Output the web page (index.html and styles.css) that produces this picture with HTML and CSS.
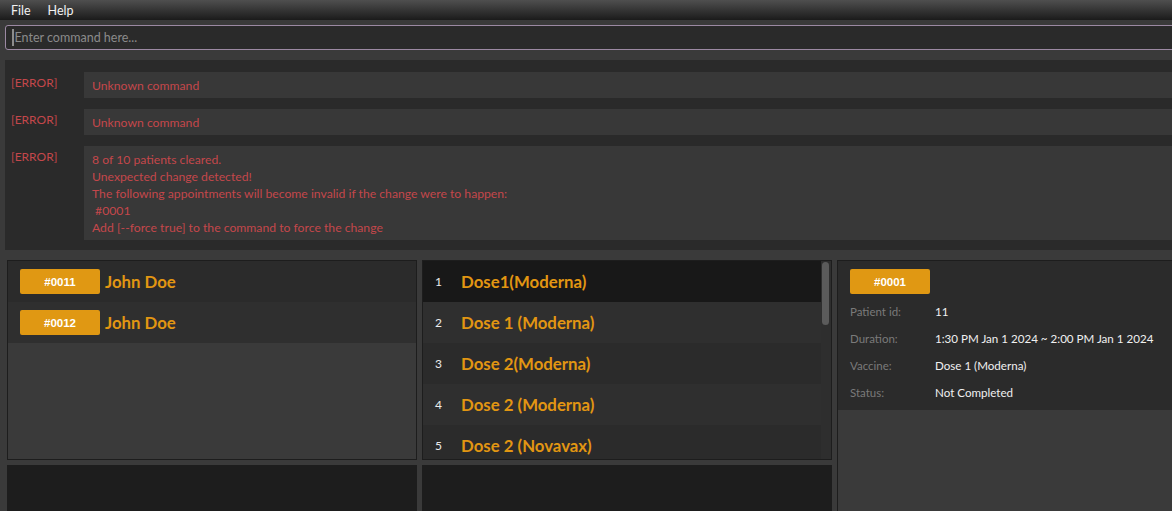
FILE: index.html
```html
<!DOCTYPE html>
<html>
<head>
<meta charset="utf-8">
<link rel="stylesheet" href="styles.css">
</head>
<body>
<div class="menubar">
  <span class="menu-item">File</span>
  <span class="menu-item">Help</span>
</div>
<div class="cmd-wrap">
  <div class="cmd"><span class="caret"></span><span class="placeholder">Enter command here...</span></div>
</div>
<div class="results">
  <div class="result-row">
    <div class="tag">[ERROR]</div>
    <div class="msg">Unknown command</div>
  </div>
  <div class="result-row">
    <div class="tag">[ERROR]</div>
    <div class="msg">Unknown command</div>
  </div>
  <div class="result-row">
    <div class="tag">[ERROR]</div>
    <div class="msg">8 of 10 patients cleared.<br>Unexpected change detected!<br>The following appointments will become invalid if the change were to happen:<br>&nbsp;#0001<br>Add [--force true] to the command to force the change</div>
  </div>
</div>
<div class="panels">
  <div class="panel patients">
    <div class="prow odd"><span class="badge">#0011</span><span class="name">John Doe</span></div>
    <div class="prow even"><span class="badge">#0012</span><span class="name">John Doe</span></div>
  </div>
  <div class="panel vaccines">
    <div class="vlist">
      <div class="vrow sel"><span class="num">1</span><span class="name">Dose1(Moderna)</span></div>
      <div class="vrow even"><span class="num">2</span><span class="name">Dose 1 (Moderna)</span></div>
      <div class="vrow odd"><span class="num">3</span><span class="name">Dose 2(Moderna)</span></div>
      <div class="vrow even"><span class="num">4</span><span class="name">Dose 2 (Moderna)</span></div>
      <div class="vrow odd"><span class="num">5</span><span class="name">Dose 2 (Novavax)</span></div>
    </div>
    <div class="scrollbar"><div class="thumb"></div></div>
  </div>
  <div class="panel detail">
    <div class="card">
      <span class="badge">#0001</span>
      <div class="fields">
        <span class="label">Patient id:</span><span class="value">11</span>
        <span class="label">Duration:</span><span class="value">1:30 PM Jan 1 2024 ~ 2:00 PM Jan 1 2024</span>
        <span class="label">Vaccine:</span><span class="value">Dose 1 (Moderna)</span>
        <span class="label">Status:</span><span class="value">Not Completed</span>
      </div>
    </div>
  </div>
  <div class="panel bottom"></div>
  <div class="panel bottom"></div>
</div>
</body>
</html>
```
FILE: styles.css
```css
* { box-sizing: border-box; }
html, body { margin: 0; padding: 0; height: 100%; overflow: hidden; }
body {
  background: #3a3a3a;
  font-family: "Lato", "Liberation Sans", sans-serif;
  font-size: 12px;
  display: flex;
  flex-direction: column;
}
.menubar {
  height: 20px;
  flex: none;
  background: linear-gradient(#4f4f4f, #1b1b1b);
  display: flex;
  align-items: center;
  gap: 17px;
  padding-left: 11px;
  color: #f2f2f2;
  font-size: 12.5px;
}
.cmd-wrap {
  flex: none;
  padding: 5px 0 10px 5px;
}
.cmd {
  height: 25px;
  margin-right: -10px;
  border: 1.5px solid #9c89a3;
  border-radius: 3px;
  background: #2a2a2a;
  display: flex;
  align-items: center;
  padding-left: 5.5px;
  color: #8a8a8a;
  font-size: 12.5px;
}
.caret {
  width: 2px;
  height: 17px;
  background: #8c8c8c;
  margin-right: 1px;
}
.results {
  flex: none;
  height: 190px;
  margin-left: 5px;
  background: #2a2a2a;
  padding-top: 12px;
  display: flex;
  flex-direction: column;
  gap: 11px;
}
.result-row {
  display: flex;
  color: #c4474b;
  line-height: 17px;
  font-size: 12.2px;
}
.tag {
  width: 79px;
  flex: none;
  padding-left: 6px;
  padding-top: 2px;
  font-size: 12px;
}
.msg {
  flex: 1;
  background: #383838;
  padding: 5px 8px 4px;
}
.panels {
  flex: 1;
  display: grid;
  grid-template-columns: 410px 410px 1fr;
  grid-template-rows: 200px 1fr;
  column-gap: 5px;
  row-gap: 5px;
  padding: 10px 0 0 7px;
  margin-right: -20px;
  min-height: 0;
}
.panel {
  border: 1px solid #1d1d1d;
  background: #3a3a3a;
  min-height: 0;
  overflow: hidden;
}
.badge {
  display: inline-flex;
  align-items: center;
  justify-content: center;
  width: 80px;
  height: 25px;
  border-radius: 2px;
  background: #e09813;
  color: #ffffff;
  font-weight: bold;
  font-size: 11.5px;
  font-family: "Liberation Sans", sans-serif;
}
.name {
  color: #e29612;
  font-weight: bold;
  font-size: 16.8px;
}
.prow {
  height: 41px;
  display: flex;
  align-items: center;
  padding-left: 12px;
  gap: 5px;
}
.odd { background: #2b2b2b; }
.even { background: #2f2f2f; }
.sel { background: #181818; }
.vaccines {
  display: flex;
  background: #2b2b2b;
}
.vlist { flex: 1; }
.vrow {
  height: 41px;
  display: flex;
  align-items: center;
}
.num {
  width: 38px;
  padding-left: 12px;
  color: #ececec;
  font-size: 12px;
}
.scrollbar {
  width: 10px;
  flex: none;
  background: #2e2e2e;
  padding: 1px 2px 0 1px;
}
.thumb {
  height: 63px;
  background: #5b5b5b;
  border-radius: 4px;
}
.detail {
  grid-column: 3;
  grid-row: 1 / span 2;
  border-right: none;
  border-bottom: none;
}
.card {
  background: #2b2b2b;
  height: 149px;
  padding: 8px 0 0 12px;
}
.fields {
  display: grid;
  grid-template-columns: 85px auto;
  grid-auto-rows: 27px;
  align-items: center;
  margin-top: 4px;
}
.label {
  color: #7a7a7a;
  font-size: 11.5px;
}
.value {
  color: #f0f0f0;
  font-size: 11.6px;
}
.bottom {
  background: #1d1d1d;
  border: none;
}
```
